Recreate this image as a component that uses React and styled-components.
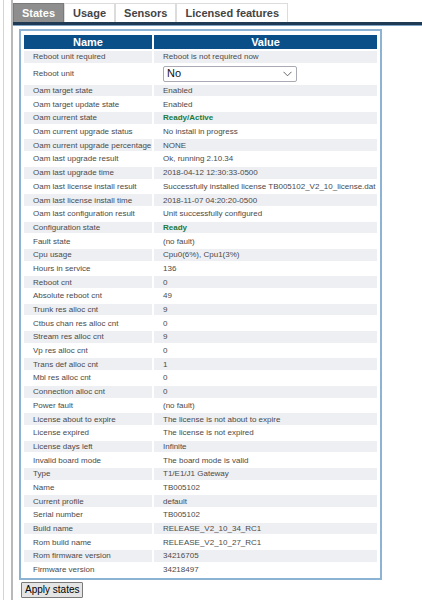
import React from "react";
import styled, { createGlobalStyle } from "styled-components";

const GlobalStyle = createGlobalStyle`
  html, body {
    margin: 0;
    padding: 0;
    background: #ffffff;
    font-family: "Liberation Sans", Arial, sans-serif;
  }
`;

const Page = styled.div`
  display: flex;
  min-height: 600px;
  padding-left: 3px;
`;

const OuterFrame = styled.div`
  display: flex;
  flex: 1;
  border-left: 1px solid #d4d4d4;
  padding-left: 7px;
`;

const Main = styled.div`
  display: flex;
  flex-direction: column;
  align-items: flex-start;
  flex: 1;
  border-left: 2px solid #b9b9b9;
`;

const TabBar = styled.div`
  display: flex;
  padding-top: 3px;
`;

const Tab = styled.div`
  height: 18px;
  line-height: 18px;
  padding: 0 8px;
  font-size: 11px;
  font-weight: bold;
  border: 1px solid ${({ active }) => (active ? "#7a7a7a" : "#dcdcdc")};
  border-bottom: none;
  background: ${({ active }) => (active ? "#8e8e8e" : "#ffffff")};
  color: ${({ active }) => (active ? "#ffffff" : "#444444")};
`;

const TabRule = styled.div`
  align-self: stretch;
  height: 3px;
  background: #1e3a54;
  border-bottom: 1px solid #7fa6c6;
`;

const Panel = styled.div`
  width: 357px;
  margin: 3px 0 0 6px;
  padding: 2px 1px 1px;
  border: 2px solid #8cb2d4;
`;

const StateTable = styled.table`
  width: 100%;
  border-collapse: separate;
  border-spacing: 2px;
  font-size: 8px;
  color: #4a4a4a;
`;

const HeadCell = styled.th`
  height: 14px;
  padding: 0;
  background: #0b4f89;
  color: #ffffff;
  font-size: 11px;
  font-weight: bold;
  line-height: 14px;
  text-align: center;
  width: ${({ w }) => w};
`;

const Row = styled.tr`
  background: ${({ striped }) => (striped ? "#eeeff3" : "#ffffff")};
`;

const Cell = styled.td`
  height: ${({ tall }) => (tall ? "18px" : "11.7px")};
  padding: 0 0 0 9px;
  line-height: 9px;
  white-space: nowrap;
  vertical-align: middle;
  color: ${({ ok }) => (ok ? "#1b7a3c" : "#4a4a4a")};
  font-weight: ${({ ok }) => (ok ? "bold" : "normal")};
`;

const SelectBox = styled.div`
  display: flex;
  align-items: center;
  justify-content: space-between;
  box-sizing: border-box;
  width: 134px;
  height: 16px;
  padding: 0 4px 0 3px;
  border: 1px solid #a9aab4;
  border-radius: 2px;
  background: #ffffff;
  color: #111111;
  font-size: 11px;
`;

const ApplyButton = styled.button`
  margin: 2px 0 0 8px;
  height: 16px;
  padding: 0 3px;
  font-family: "Liberation Sans", Arial, sans-serif;
  font-size: 10px;
  line-height: 14px;
  color: #000000;
  background: #e4e4e4;
  border: 1px solid #7a7a7a;
  border-radius: 1px;
`;

const rows = [
  ["Reboot unit required", "Reboot is not required now"],
  ["Reboot unit", "select"],
  ["Oam target state", "Enabled"],
  ["Oam target update state", "Enabled"],
  ["Oam current state", "Ready/Active", true],
  ["Oam current upgrade status", "No install in progress"],
  ["Oam current upgrade percentage", "NONE"],
  ["Oam last upgrade result", "Ok, running 2.10.34"],
  ["Oam last upgrade time", "2018-04-12 12:30:33-0500"],
  ["Oam last license install result", "Successfully installed license TB005102_V2_10_license.dat"],
  ["Oam last license install time", "2018-11-07 04:20:20-0500"],
  ["Oam last configuration result", "Unit successfully configured"],
  ["Configuration state", "Ready", true],
  ["Fault state", "(no fault)"],
  ["Cpu usage", "Cpu0(6%), Cpu1(3%)"],
  ["Hours in service", "136"],
  ["Reboot cnt", "0"],
  ["Absolute reboot cnt", "49"],
  ["Trunk res alloc cnt", "9"],
  ["Ctbus chan res alloc cnt", "0"],
  ["Stream res alloc cnt", "9"],
  ["Vp res alloc cnt", "0"],
  ["Trans def alloc cnt", "1"],
  ["Mbl res alloc cnt", "0"],
  ["Connection alloc cnt", "0"],
  ["Power fault", "(no fault)"],
  ["License about to expire", "The license is not about to expire"],
  ["License expired", "The license is not expired"],
  ["License days left", "Infinite"],
  ["Invalid board mode", "The board mode is valid"],
  ["Type", "T1/E1/J1 Gateway"],
  ["Name", "TB005102"],
  ["Current profile", "default"],
  ["Serial number", "TB005102"],
  ["Build name", "RELEASE_V2_10_34_RC1"],
  ["Rom build name", "RELEASE_V2_10_27_RC1"],
  ["Rom firmware version", "34216705"],
  ["Firmware version", "34218497"],
];

const Chevron = () => (
  <svg width="9" height="6" viewBox="0 0 9 6">
    <path d="M0.5 0.8 L4.5 4.8 L8.5 0.8" fill="none" stroke="#555" strokeWidth="0.9" />
  </svg>
);

const App = () => {
  return (
    <Page>
      <GlobalStyle />
      <OuterFrame>
        <Main>
          <TabBar>
            <Tab active>States</Tab>
            <Tab>Usage</Tab>
            <Tab>Sensors</Tab>
            <Tab>Licensed features</Tab>
          </TabBar>
          <TabRule />
          <Panel>
            <StateTable>
              <thead>
                <tr>
                  <HeadCell w="128px">Name</HeadCell>
                  <HeadCell>Value</HeadCell>
                </tr>
              </thead>
              <tbody>
                {rows.map(([name, value, ok], i) => (
                  <Row key={name} striped={i % 2 === 0}>
                    <Cell tall={value === "select"}>{name}</Cell>
                    <Cell tall={value === "select"} ok={ok}>
                      {value === "select" ? (
                        <SelectBox>
                          <span>No</span>
                          <Chevron />
                        </SelectBox>
                      ) : (
                        value
                      )}
                    </Cell>
                  </Row>
                ))}
              </tbody>
            </StateTable>
          </Panel>
          <ApplyButton>Apply states</ApplyButton>
        </Main>
      </OuterFrame>
    </Page>
  );
};

export default App;
